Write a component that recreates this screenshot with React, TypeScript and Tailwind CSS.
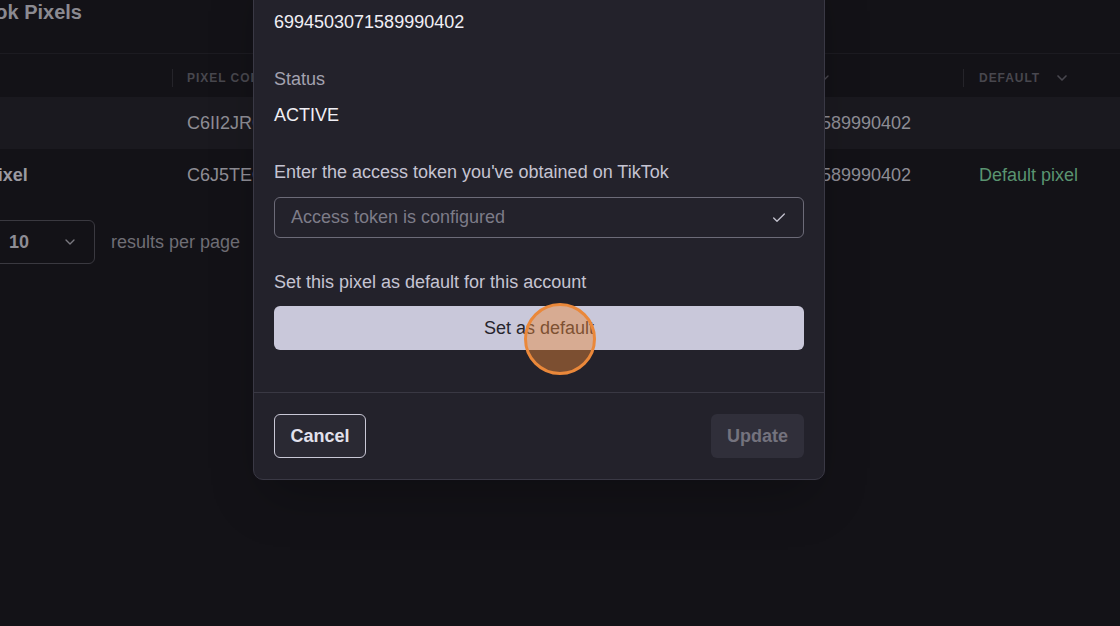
import { Check, ChevronDown } from "lucide-react";

const rows = [
  { name: "Main pixel", code: "C6II2JRC77U1234ABCD", id: "6994503071589990402", isDefault: false },
  { name: "Test pixel", code: "C6J5TEQ3C77U5678EFGH", id: "6994503071589990402", isDefault: true },
];

function Field({ label, value }: { label: string; value: string }) {
  return (
    <div className="flex flex-col gap-3">
      <p className="text-[18px] leading-6 text-[#a3a2b0]">{label}</p>
      <p className="text-[18px] leading-6 text-[#f0eff5]">{value}</p>
    </div>
  );
}

export default function App() {
  return (
    <div
      className="relative w-[1120px] h-[626px] overflow-hidden bg-[#131217]"
      style={{ fontFamily: '"Liberation Sans", Arial, sans-serif' }}
    >
      {/* page behind the dialog */}
      <div className="-ml-[60px] w-[1240px]">
        <h1 className="px-4 h-[53px] text-[20px] leading-6 font-bold text-[#8b8a91]">TikTok Pixels</h1>

        <div className="flex h-[44px] items-center pt-[4px] border-t border-[#1c1b21] text-[12px] font-bold tracking-[0.08em] uppercase text-[#48474e]">
          <div className="w-[232px] px-4">Name</div>
          <div className="flex w-[560px] items-center">
            <span className="h-[18px] w-px bg-[#25242a]" />
            <span className="pl-[14px]">Pixel code</span>
          </div>
          <div className="flex w-[231px] items-center">
            <span className="h-[18px] w-px bg-[#25242a]" />
            <span className="pl-[14px]">Pixel ID</span>
            <ChevronDown className="ml-3 h-4 w-4" />
          </div>
          <div className="flex items-center">
            <span className="h-[18px] w-px bg-[#25242a]" />
            <span className="pl-[15px]">Default</span>
            <ChevronDown className="ml-[14px] h-4 w-4" strokeWidth={2.5} />
          </div>
        </div>

        {rows.map((r, i) => (
          <div
            key={r.name}
            className={`flex h-[52px] items-center text-[18px] text-[#8e8d95] ${i === 0 ? "bg-[#1a191f]" : "bg-[#131217]"}`}
          >
            <div className="w-[232px] pl-[6px] font-bold text-[#9b9aa1]">{i === 1 ? r.name : ""}</div>
            <div className="w-[559px] pl-[15px]">{r.code}</div>
            <div className="w-[232px] flex justify-end pr-[52px] whitespace-nowrap">{r.id}</div>
            <div className="pl-[16px] text-[#5a9470]">{r.isDefault ? "Default pixel" : ""}</div>
          </div>
        ))}

        <div className="mt-[19px] flex items-center gap-4 pl-[52px]">
          <div className="flex h-[44px] w-[103px] items-center justify-between rounded-[6px] border border-[#3a3940] pl-4 pr-[16px]">
            <span className="text-[18px] font-bold text-[#8e8d95]">10</span>
            <ChevronDown className="h-4 w-4 text-[#7a7980]" />
          </div>
          <span className="text-[18px] text-[#6f6e75]">results per page</span>
        </div>
      </div>

      {/* dialog */}
      <div className="absolute left-[253px] top-[-51px] w-[572px] rounded-[10px] border border-[#3a3945] bg-[#23222b] shadow-2xl">
        <div className="px-[20px] pt-6 pb-[42px]">
          <Field label="Pixel ID" value="6994503071589990402" />
          <div className="mt-[33px]">
            <Field label="Status" value="ACTIVE" />
          </div>

          <p className="mt-[33px] text-[18px] leading-6 text-[#c5c4d2]">Enter the access token you've obtained on TikTok</p>
          <div className="mt-[13px] flex h-[41px] items-center justify-between rounded-[6px] border border-[#6c6b78] pl-4 pr-[16px]">
            <span className="text-[18px] text-[#7d7c88]">Access token is configured</span>
            <Check className="h-4 w-4 text-[#c3c2ce]" strokeWidth={2} />
          </div>

          <p className="mt-[32px] text-[18px] leading-6 text-[#c5c4d2]">Set this pixel as default for this account</p>
          <button className="mt-3 flex h-[44px] w-full items-center justify-center rounded-[6px] bg-[#c9c8da] text-[18px] text-[#26252d]">
            Set as default
          </button>
        </div>

        <div className="flex items-center justify-between border-t border-[#393843] px-[20px] py-[21px]">
          <button className="h-[44px] w-[92px] rounded-[6px] border border-[#c9c8d6] bg-[#2a2933] text-[18px] font-semibold text-[#e2e1ec]">
            Cancel
          </button>
          <button className="h-[44px] w-[93px] rounded-[6px] bg-[#302f3a] text-[18px] font-semibold text-[#74737e]">
            Update
          </button>
        </div>
      </div>

      {/* click indicator */}
      <div className="pointer-events-none absolute left-[524px] top-[303px] h-[72px] w-[72px] rounded-full border-[3px] border-[#ea883a] bg-[#e8883a]/45" />
    </div>
  );
}
